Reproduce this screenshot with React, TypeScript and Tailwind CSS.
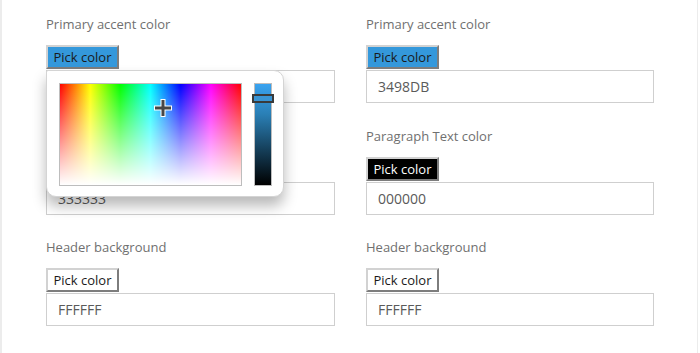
import React from "react";

const font = { fontFamily: '"Open Sans", "Noto Sans", sans-serif' };

function PickButton({ variant }: { variant: "blue" | "black" | "white" }) {
  const cls =
    variant === "blue"
      ? "bg-[#3498db] text-[#1a1a1a]"
      : variant === "black"
      ? "bg-black text-white"
      : "bg-white text-[#1a1a1a]";
  return (
    <div className="flex">
      <button
        className={`h-[24px] w-[73px] px-0 text-[13px] leading-[20px] border-2 border-t-[#d2d2d2] border-l-[#d2d2d2] border-r-[#7d7d7d] border-b-[#7d7d7d] ${cls}`}
      >
        Pick color
      </button>
    </div>
  );
}

function Field({
  label,
  value,
  variant,
  children,
}: {
  label: string;
  value: string;
  variant: "blue" | "black" | "white";
  children?: React.ReactNode;
}) {
  return (
    <div className="relative flex flex-col">
      <div className="h-[20px] leading-[20px] text-[13px] text-[#707070]">{label}</div>
      <div className="mt-[11px]">
        <PickButton variant={variant} />
      </div>
      <div className="mt-[1px] h-[33px] border border-[#cfcfcf] bg-white flex items-center pl-[11px] text-[14px] text-[#5a5a5a]">
        {value}
      </div>
      {children}
    </div>
  );
}

function Popup() {
  return (
    <div className="absolute left-0 top-[56px] z-10 w-[238px] h-[127px] bg-white border border-[#d4d4d4] rounded-[10px] rounded-tl-[2px] shadow-[0_9px_14px_rgba(0,0,0,0.28)] flex pl-[12px] pt-[12px]">
      <div className="relative w-[183px] h-[103px] border border-[#bdbdbd] bg-[linear-gradient(to_right,#ff0000,#ffff00,#00ff00,#00ffff,#0000ff,#ff00ff,#ff0000)]">
        <div className="absolute inset-0 bg-[linear-gradient(to_bottom,rgba(255,255,255,0),rgba(255,255,255,0.55)_55%,#ffffff)]" />
        <svg className="absolute left-[93px] top-[14px]" width="20" height="20" viewBox="0 0 20 20">
          <path d="M10 1 V19 M1 10 H19" stroke="#ffffff" strokeWidth="5" />
          <path d="M10 2 V18 M2 10 H18" stroke="#474747" strokeWidth="3" />
        </svg>
      </div>
      <div className="relative ml-[12px] w-[18px] h-[103px] border border-[#bdbdbd] bg-[linear-gradient(to_bottom,#3aa3f0,#2a7fb5_30%,#153f5a_65%,#000000)]">
        <div className="absolute left-[-3px] top-[10px] w-[22px] h-[9px] border-2 border-[#3a3a3a] bg-[#3a95d4]" />
      </div>
    </div>
  );
}

export default function App() {
  return (
    <div className="w-[700px] h-[353px] bg-white overflow-hidden" style={font}>
      <div className="w-[698px] h-[353px] border-l-2 border-r border-[#ececec] pt-[14px] pl-[44px]">
        <div className="grid grid-cols-[289px_288px] gap-x-[31px] gap-y-[22.5px]">
          <Field label="Primary accent color" value="3498DB" variant="blue">
            <Popup />
          </Field>
          <Field label="Primary accent color" value="3498DB" variant="blue" />
          <Field label="Secondary color" value="333333" variant="white" />
          <Field label="Paragraph Text color" value="000000" variant="black" />
          <Field label="Header background" value="FFFFFF" variant="white" />
          <Field label="Header background" value="FFFFFF" variant="white" />
        </div>
      </div>
    </div>
  );
}
